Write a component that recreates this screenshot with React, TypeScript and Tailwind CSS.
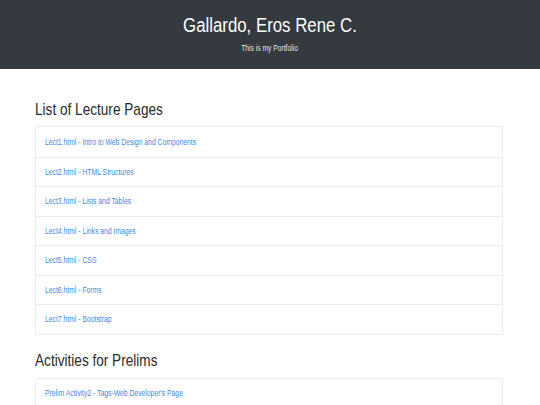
const lectures = [
  'Lect1.html - Intro to Web Design and Components',
  'Lect2.html - HTML Structures',
  'Lect3.html - Lists and Tables',
  'Lect4.html - Links and Images',
  'Lect5.html - CSS',
  'Lect6.html - Forms',
  'Lect7.html - Bootstrap',
];

const prelims = ["Prelim Activity2 - Tags-Web Developer's Page"];

// the screenshot's font is a narrow grotesque; squeeze Liberation Sans to match
const narrow = 'inline-block scale-x-[0.82] whitespace-nowrap';

const ListGroup = ({ items }: { items: string[] }) => (
  <div className="w-[468px] border border-[#ececec] rounded-[2px] bg-white">
    {items.map((item, i) => (
      <div
        key={item}
        className={`h-[29.5px] flex items-center pl-[9px] text-[8.3px] text-[#3a8be6] ${
          i > 0 ? 'border-t border-[#ececec]' : ''
        }`}
      >
        <a href="#" className={`${narrow} origin-left`}>
          {item}
        </a>
      </div>
    ))}
  </div>
);

export default function App() {
  return (
    <div
      className="w-[540px] h-[405px] overflow-hidden bg-white"
      style={{ fontFamily: '"Liberation Sans", Arial, sans-serif' }}
    >
      <header className="h-[69px] bg-[#343a40] text-white flex flex-col items-center">
        <h1 className={`${narrow} mt-[11px] text-[20.5px] leading-[28px]`}>Gallardo, Eros Rene C.</h1>
        <p className={`${narrow} mt-[5px] text-[8.2px] leading-[10px] text-[#e6e6e6]`}>This is my Portfolio</p>
      </header>

      <main className="px-[35px]">
        <h2 className={`${narrow} origin-left block mt-[30px] mb-[6px] text-[16.6px] leading-[21px] text-[#2a2a2a]`}>
          List of Lecture Pages
        </h2>
        <ListGroup items={lectures} />

        <h2 className={`${narrow} origin-left block mt-[15px] mb-[7px] text-[16.6px] leading-[21px] text-[#2a2a2a]`}>
          Activities for Prelims
        </h2>
        <ListGroup items={prelims} />
      </main>
    </div>
  );
}
